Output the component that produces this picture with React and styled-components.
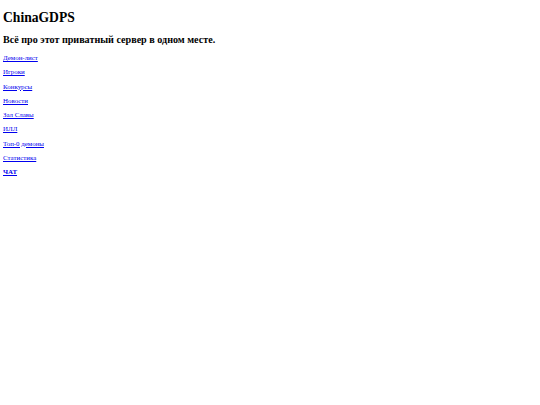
import React from "react";
import styled, { createGlobalStyle } from "styled-components";

// the reference is a default-styled page seen at roughly 0.42 scale, so all sizes are scaled down
const GlobalStyle = createGlobalStyle`
  html, body {
    background: #ffffff;
  }
  body {
    margin: 3px;
    font-family: "Liberation Serif", "Times New Roman", serif;
    color: #000000;
  }
`;

// plain block flow so the vertical margins collapse like a default document
const Page = styled.div`
  display: block;
`;

const Title = styled.h1`
  font-size: 13.6px;
  line-height: 15.5px;
  font-weight: bold;
  margin: 6.5px 0 9.05px;
`;

const Subtitle = styled.h2`
  font-size: 10.125px;
  line-height: 11.6px;
  font-weight: bold;
  margin: 8.4px 0;
`;

const NavItem = styled.p`
  font-size: 6.9px;
  line-height: 7.5px;
  margin: 6.75px 0;
`;

const NavLink = styled.a`
  color: #0000ee;
  text-decoration: underline;
  font-weight: ${(p) => (p.$bold ? "bold" : "normal")};
`;

const links = [
  { label: "Демон-лист" },
  { label: "Игроки" },
  { label: "Конкурсы" },
  { label: "Новости" },
  { label: "Зал Славы" },
  { label: "ИЛЛ" },
  { label: "Топ-0 демоны" },
  { label: "Статистика" },
  { label: "ЧАТ", bold: true },
];

const App = () => {
  return (
    <Page>
      <GlobalStyle />
      <Title>ChinaGDPS</Title>
      <Subtitle>Всё про этот приватный сервер в одном месте.</Subtitle>
      {links.map((l) => (
        <NavItem key={l.label}>
          <NavLink href="#" $bold={l.bold}>
            {l.label}
          </NavLink>
        </NavItem>
      ))}
    </Page>
  );
};

export default App;
